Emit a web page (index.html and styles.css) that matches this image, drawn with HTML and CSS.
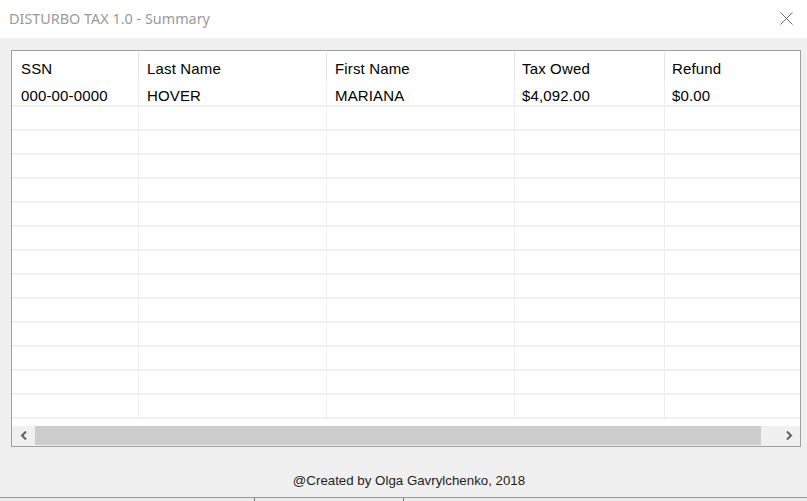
FILE: index.html
```html
<!DOCTYPE html>
<html>
<head>
<meta charset="utf-8">
<link rel="stylesheet" href="styles.css">
</head>
<body>
<div class="window">
  <div class="titlebar">
    <span class="title">DISTURBO TAX 1.0 - Summary</span>
    <svg class="close" width="13" height="13" viewBox="0 0 13 13"><path d="M0.5 0.5 L12.5 12.5 M12.5 0.5 L0.5 12.5" stroke="#6f6f6f" stroke-width="1" fill="none"/></svg>
  </div>
  <div class="content">
    <div class="grid">
      <div class="rows">
        <div class="row head">
          <div class="cell">SSN</div>
          <div class="cell">Last Name</div>
          <div class="cell">First Name</div>
          <div class="cell">Tax Owed</div>
          <div class="cell">Refund</div>
        </div>
        <div class="row data">
          <div class="cell">000-00-0000</div>
          <div class="cell">HOVER</div>
          <div class="cell">MARIANA</div>
          <div class="cell">$4,092.00</div>
          <div class="cell">$0.00</div>
        </div>
        <div class="row data"><div class="cell"></div><div class="cell"></div><div class="cell"></div><div class="cell"></div><div class="cell"></div></div>
        <div class="row data"><div class="cell"></div><div class="cell"></div><div class="cell"></div><div class="cell"></div><div class="cell"></div></div>
        <div class="row data"><div class="cell"></div><div class="cell"></div><div class="cell"></div><div class="cell"></div><div class="cell"></div></div>
        <div class="row data"><div class="cell"></div><div class="cell"></div><div class="cell"></div><div class="cell"></div><div class="cell"></div></div>
        <div class="row data"><div class="cell"></div><div class="cell"></div><div class="cell"></div><div class="cell"></div><div class="cell"></div></div>
        <div class="row data"><div class="cell"></div><div class="cell"></div><div class="cell"></div><div class="cell"></div><div class="cell"></div></div>
        <div class="row data"><div class="cell"></div><div class="cell"></div><div class="cell"></div><div class="cell"></div><div class="cell"></div></div>
        <div class="row data"><div class="cell"></div><div class="cell"></div><div class="cell"></div><div class="cell"></div><div class="cell"></div></div>
        <div class="row data"><div class="cell"></div><div class="cell"></div><div class="cell"></div><div class="cell"></div><div class="cell"></div></div>
        <div class="row data"><div class="cell"></div><div class="cell"></div><div class="cell"></div><div class="cell"></div><div class="cell"></div></div>
        <div class="row data"><div class="cell"></div><div class="cell"></div><div class="cell"></div><div class="cell"></div><div class="cell"></div></div>
        <div class="row data"><div class="cell"></div><div class="cell"></div><div class="cell"></div><div class="cell"></div><div class="cell"></div></div>
        <div class="row data"><div class="cell"></div><div class="cell"></div><div class="cell"></div><div class="cell"></div><div class="cell"></div></div>
      </div>
      <div class="hscroll">
        <div class="arrow">
          <svg width="8" height="9" viewBox="0 0 8 9"><path d="M6 0.5 L2 4.5 L6 8.5" stroke="#606060" stroke-width="2" fill="none"/></svg>
        </div>
        <div class="track"><div class="thumb"></div></div>
        <div class="arrow">
          <svg width="8" height="9" viewBox="0 0 8 9"><path d="M2 0.5 L6 4.5 L2 8.5" stroke="#606060" stroke-width="2" fill="none"/></svg>
        </div>
      </div>
    </div>
    <div class="footer">@Created by Olga Gavrylchenko, 2018</div>
  </div>
  <div class="behind">
    <div class="bcell first">Federal Tax Withheld:</div>
    <div class="bcell second"></div>
    <div class="bcell third"></div>
  </div>
</div>
</body>
</html>
```

FILE: styles.css
```css
html, body {
  margin: 0;
  padding: 0;
}
body {
  width: 807px;
  height: 501px;
  overflow: hidden;
  background: #f0f0f0;
  font-family: "Liberation Sans", Arial, sans-serif;
}
.window {
  display: flex;
  flex-direction: column;
  height: 501px;
}
.titlebar {
  height: 38px;
  background: #ffffff;
  display: flex;
  align-items: center;
  justify-content: space-between;
  padding: 0 14px 0 9px;
  box-sizing: border-box;
}
.title {
  font-family: "Noto Sans", "Open Sans", sans-serif;
  font-size: 14.4px;
  color: #9a9a9a;
  margin-top: -1px;
}
.close {
  display: block;
  margin-top: -1px;
}
.content {
  height: 459px;
  padding: 12px 6px 0 11px;
  box-sizing: border-box;
  display: flex;
  flex-direction: column;
}
.grid {
  height: 397px;
  border: 1px solid #a0a0a0;
  box-sizing: border-box;
  background: #ffffff;
  display: flex;
  flex-direction: column;
}
.rows {
  flex: 1;
  overflow: hidden;
}
.row {
  display: grid;
  grid-template-columns: 126px 188px 188px 150px 1fr;
  font-size: 15px;
  letter-spacing: 0.15px;
  color: #000000;
  line-height: 17px;
}
.row .cell {
  box-sizing: border-box;
  white-space: nowrap;
}
.row .cell + .cell {
  border-left: 1px solid #eeeeee;
}
.head {
  height: 32px;
}
.head .cell {
  padding: 9px 0 0 9px;
}
.head .cell + .cell {
  border-left: 1px solid #e3e3e3;
  margin: 1px 0 1px 0;
  padding-top: 8px;
  padding-left: 8px;
}
.head .cell:nth-child(n+4) {
  padding-left: 7px;
}
.data {
  height: 24px;
  box-sizing: border-box;
  border-bottom: 2px solid #f1f1f1;
}
.data .cell {
  padding: 4px 0 0 9px;
}
.data .cell + .cell {
  padding-left: 8px;
}
.data .cell:nth-child(n+4) {
  padding-left: 7px;
}
.hscroll {
  height: 20px;
  display: flex;
  align-items: stretch;
  background: #f0f0f0;
  box-sizing: border-box;
  padding-bottom: 1px;
}
.arrow {
  width: 23px;
  display: flex;
  align-items: center;
  justify-content: center;
}
.track {
  flex: 1;
  display: flex;
}
.thumb {
  width: 726px;
  background: #cdcdcd;
}
.footer {
  flex: 1;
  text-align: center;
  font-size: 13.3px;
  color: #1e1e1e;
  padding-top: 26px;
  padding-left: 6px;
  box-sizing: border-box;
  line-height: 15px;
}
.behind {
  height: 4px;
  border-top: 1px solid #9a9a9a;
  box-sizing: border-box;
  display: flex;
  overflow: hidden;
  background: #ececec;
}
.bcell {
  font-family: "Liberation Sans", Arial, sans-serif;
  font-weight: bold;
  font-size: 13px;
  line-height: 15px;
  color: #000000;
  white-space: nowrap;
}
.first {
  width: 263px;
  margin-left: -8px;
  border-right: 1px solid #777777;
  box-sizing: border-box;
  overflow: hidden;
}
.second {
  width: 149px;
  border-right: 1px solid #777777;
  box-sizing: border-box;
}
.third {
  flex: 1;
}
```
